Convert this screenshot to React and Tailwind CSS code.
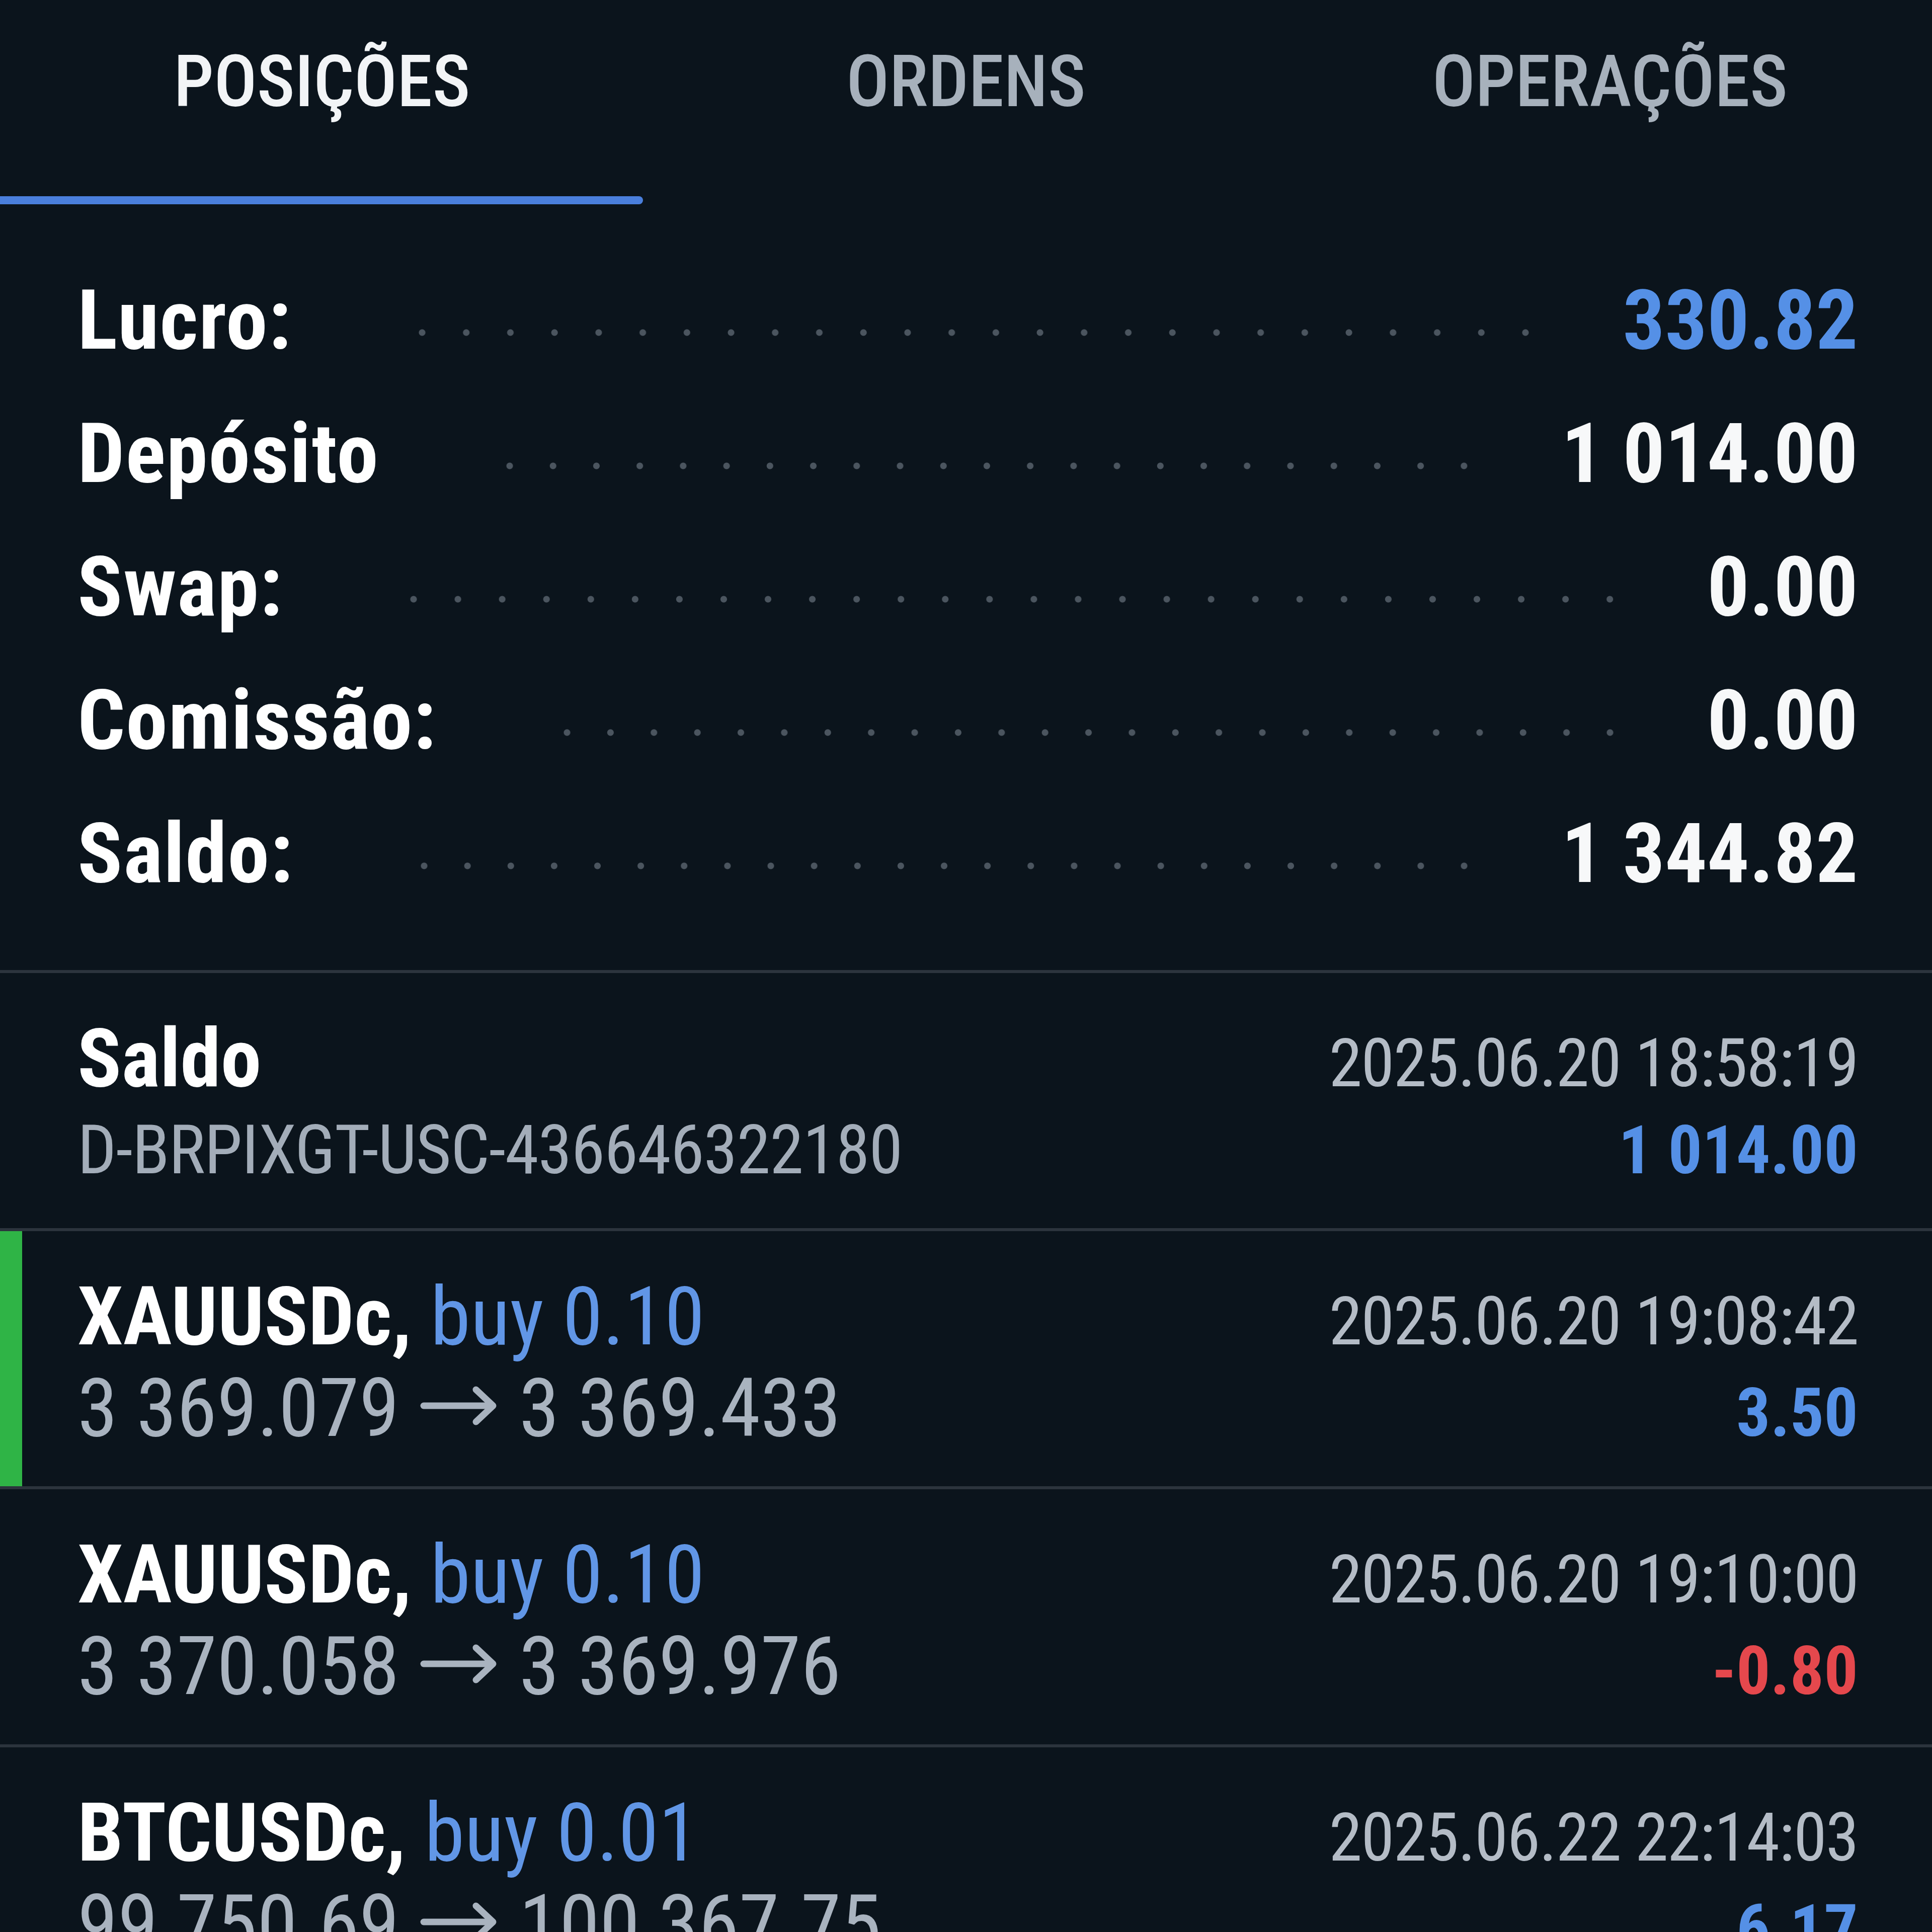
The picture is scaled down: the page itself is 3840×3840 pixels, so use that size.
const summary = [
  { label: "Lucro:", value: "330.82", blue: true },
  { label: "Depósito", value: "1 014.00" },
  { label: "Swap:", value: "0.00" },
  { label: "Comissão:", value: "0.00" },
  { label: "Saldo:", value: "1 344.82" },
];

const positions = [
  {
    symbol: "XAUUSDc,",
    side: "buy 0.10",
    open: "3 369.079",
    close: "3 369.433",
    time: "2025.06.20 19:08:42",
    profit: "3.50",
    marked: true,
  },
  {
    symbol: "XAUUSDc,",
    side: "buy 0.10",
    open: "3 370.058",
    close: "3 369.976",
    time: "2025.06.20 19:10:00",
    profit: "-0.80",
    negative: true,
  },
  {
    symbol: "BTCUSDc,",
    side: "buy 0.01",
    open: "99 750.69",
    close: "100 367.75",
    time: "2025.06.22 22:14:03",
    profit: "6.17",
  },
];

function Divider() {
  return <div className="h-[6px] w-full bg-[#2c343d]" />;
}

function Arrow() {
  return (
    <svg
      viewBox="0 0 160 80"
      className="ml-[38px] mr-[40px] inline-block h-[80px] w-[160px] align-[20px]"
      fill="none"
      stroke="currentColor"
      strokeWidth="13"
      strokeLinecap="round"
      strokeLinejoin="round"
    >
      <path d="M10 40H146" />
      <path d="M114 8L148 40L114 72" />
    </svg>
  );
}

function Row({ marked, title, subtitle, time, value, valueClass }) {
  return (
    <div
      className={
        marked
          ? "h-[507px] border-l-[44px] border-[#2fb446] pt-[79px] pl-[110px] pr-[147px]"
          : "h-[507px] pt-[79px] pl-[154px] pr-[147px]"
      }
    >
      <div className="flex h-[182px] items-baseline justify-between leading-[182px]">
        <span className="text-[162px]">{title}</span>
        <span className="text-[134px] tracking-[-0.015em] text-[#b4bcc6]">{time}</span>
      </div>
      <div className="flex h-[182px] items-baseline justify-between leading-[182px]">
        {subtitle}
        <span className={"text-[134px] font-bold " + valueClass}>{value}</span>
      </div>
    </div>
  );
}

export default function App() {
  return (
    <div className="h-[3840px] w-[3840px] overflow-hidden bg-[#0b141c] font-[family-name:'Roboto_Condensed','Liberation_Sans_Narrow',Roboto,sans-serif] text-white">
      {/* tabs */}
      <div className="grid h-[390px] grid-cols-3">
        {["POSIÇÕES", "ORDENS", "OPERAÇÕES"].map((tab, i) => (
          <div
            key={tab}
            className={
              "flex justify-center pt-[92px] text-[142px] font-medium leading-none " +
              (i === 0 ? "text-[#f2f4f6]" : "text-[#a7b1bc]")
            }
          >
            {tab}
          </div>
        ))}
      </div>
      <div className="h-[16px]">
        <div className="h-full w-[1278px] rounded-r-full bg-[#4a7fdc]" />
      </div>

      {/* account summary */}
      <div className="pt-[98px] pb-[99px] pl-[154px] pr-[147px]">
        {summary.map((row) => (
          <div key={row.label} className="flex h-[265px] items-start text-[166px] font-bold leading-[265px]">
            <span className="tracking-[0.01em]">{row.label}</span>
            <div className="mt-[147px] ml-[216px] mr-[150px] h-[20px] flex-1 bg-[radial-gradient(circle,#4b555f_6px,transparent_7px)] bg-[length:86px_20px] bg-repeat-space" />
            <span className={row.blue ? "text-[#5590e6]" : "text-[#f7f8f9]"}>{row.value}</span>
          </div>
        ))}
      </div>

      <Divider />
      <Row
        title={<span className="font-bold">Saldo</span>}
        subtitle={
          <span className="text-[136px] tracking-[-0.01em] text-[#a3adb9]">D-BRPIXGT-USC-436646322180</span>
        }
        time="2025.06.20 18:58:19"
        value="1 014.00"
        valueClass="text-[#5590e6]"
      />
      {positions.map((p) => (
        <div key={p.time}>
          <Divider />
          <Row
            marked={p.marked}
            title={
              <>
                <span className="font-bold">{p.symbol}</span>{" "}
                <span className="text-[#6196e6]">{p.side}</span>
              </>
            }
            subtitle={
              <span className="text-[162px] text-[#a9b3bf]">
                {p.open}
                <Arrow />
                {p.close}
              </span>
            }
            time={p.time}
            value={p.profit}
            valueClass={p.negative ? "text-[#e5484d]" : "text-[#5590e6]"}
          />
        </div>
      ))}
    </div>
  );
}
